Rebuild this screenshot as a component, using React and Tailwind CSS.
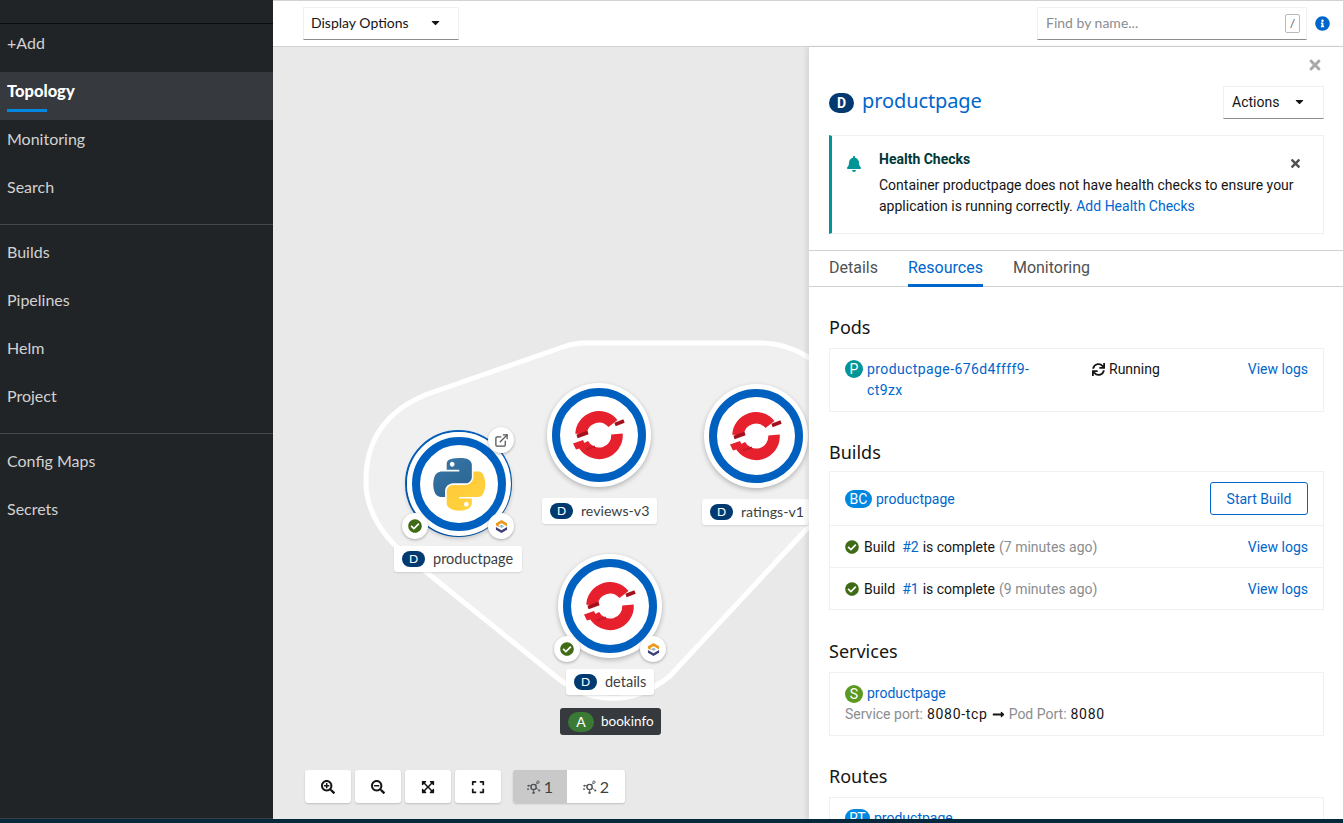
import { FaBell, FaCaretDown, FaCheckCircle, FaExpand, FaExpandArrowsAlt, FaInfoCircle, FaLongArrowAltRight, FaSearchMinus, FaSearchPlus, FaSync, FaTimes } from 'react-icons/fa';
import { ExternalLink } from 'lucide-react';

const navTop = ['Monitoring', 'Search'];
const navMid = ['Builds', 'Pipelines', 'Helm', 'Project'];
const navBottom = ['Config Maps', 'Secrets'];

function NavItem({ label, active }) {
  if (active) {
    return (
      <div className="relative h-12 bg-[#36393d] pl-[7px] pb-[10px] flex items-center text-white font-black text-[16.5px]">
        {label}
        <span className="absolute left-[7px] top-[37px] w-10 h-[3px] bg-[#0088e0]" />
      </div>
    );
  }
  return <div className="h-12 pl-[7px] pb-[10px] flex items-center text-[#d2d2d2] text-base">{label}</div>;
}

function Sidebar() {
  return (
    <aside className="w-[273px] shrink-0 bg-[#212427] font-['Lato',sans-serif] border-b border-[#3c3f42]">
      <div className="h-6 border-b border-[#0b0c0d]" />
      <div className="h-[38px] mb-[10px] pl-[7px] flex items-center text-[#d2d2d2] text-base">+Add</div>
      <NavItem label="Topology" active />
      {navTop.map((n) => <NavItem key={n} label={n} />)}
      <div className="my-2 h-px bg-[#45484b]" />
      {navMid.map((n) => <NavItem key={n} label={n} />)}
      <div className="my-2 h-px bg-[#45484b]" />
      {navBottom.map((n) => <NavItem key={n} label={n} />)}
    </aside>
  );
}

function Toolbar() {
  return (
    <div className="h-[47px] shrink-0 bg-white border-t border-b border-[#d2d2d2] flex items-center pl-[30px] pr-[13px] font-['Lato',sans-serif]">
      <button className="w-[156px] h-[33px] pl-[7px] pb-[2px] border border-[#f0f0f0] border-b-[#8a8d90] flex items-center justify-between pr-[16px] text-sm text-[#151515]">
        Display Options
        <FaCaretDown className="text-[13px]" />
      </button>
      <div className="ml-auto w-[270px] h-[33px] border border-[#f0f0f0] border-b-[#8a8d90] flex items-center justify-between pl-2 pr-[6px] pb-[2px] text-sm text-[#8a8d90]">
        Find by name...
        <span className="w-[15px] h-[19px] mt-[2px] border border-[#b8bbbe] rounded-[2px] text-[#4f5255] text-xs flex items-center justify-center">/</span>
      </div>
      <FaInfoCircle className="ml-2 text-[#0066cc] text-[15px]" />
    </div>
  );
}

function RedHatLogo() {
  return (
    <svg viewBox="0 0 60 60" className="w-[60px] h-[60px]">
      <path d="M12 29 A18 18 0 0 1 44 18.5" fill="none" stroke="#e7202e" strokeWidth="11.5" />
      <path d="M48 29 A18 18 0 0 1 14 38.5" fill="none" stroke="#e7202e" strokeWidth="11.5" />
      <path d="M4 38.5 L14 35 L17 41.5 L7 44.5 Z" fill="#e7202e" />
      <path d="M8 31.5 L19 27.5" stroke="#a3111d" strokeWidth="3.5" />
      <path d="M46 19.5 L55 16" stroke="#a3111d" strokeWidth="3.5" />
      <path d="M17 44.5 L26 41.5" stroke="#c91a27" strokeWidth="2" />
    </svg>
  );
}

function PythonLogo() {
  return (
    <svg viewBox="0 0 112 113" className="w-[53px] h-[53px]">
      <defs>
        <linearGradient id="pyBlue" x1="0.2" y1="0" x2="0.8" y2="1">
          <stop offset="0" stopColor="#3776a6" />
          <stop offset="1" stopColor="#2a6390" />
        </linearGradient>
        <linearGradient id="pyYellow" x1="0.8" y1="1" x2="0.2" y2="0">
          <stop offset="0" stopColor="#ffd43b" />
          <stop offset="1" stopColor="#ffc83d" />
        </linearGradient>
      </defs>
      <path fill="url(#pyBlue)" d="M54.9 0C50.3 0 46 .4 42.1 1.1 30.8 3.1 28.7 7.3 28.7 15v10.3h26.8v3.4H18.6C10.8 28.7 4 33.3 1.9 42.3c-2.5 10.2-2.6 16.6 0 27.2 1.9 7.9 6.5 13.5 14.2 13.5h9.2V70.8c0-8.8 7.7-16.7 16.8-16.7h26.8c7.4 0 13.4-6.1 13.4-13.6V15c0-7.3-6.1-12.7-13.4-13.9C64.3.3 59.5 0 54.9 0zM40.4 8.2c2.8 0 5 2.3 5 5.1s-2.3 5.1-5 5.1c-2.8 0-5-2.3-5-5.1s2.3-5.1 5-5.1z" />
      <path fill="url(#pyYellow)" d="M85.6 28.7v11.9c0 9.2-7.8 17-16.7 17H42.1c-7.3 0-13.4 6.3-13.4 13.6v25.5c0 7.3 6.3 11.5 13.4 13.6 8.5 2.5 16.6 3 26.8 0 6.7-2 13.4-5.9 13.4-13.6V86.5H55.5v-3.4h40.2c7.8 0 10.7-5.4 13.4-13.6 2.8-8.4 2.7-16.5 0-27.2-1.9-7.8-5.6-13.6-13.4-13.6H85.6zM70.6 93.3c2.8 0 5 2.3 5 5.1s-2.3 5.1-5 5.1c-2.8 0-5-2.3-5-5.1s2.3-5.1 5-5.1z" />
    </svg>
  );
}

function S2iIcon() {
  return (
    <svg viewBox="0 0 14 14" className="w-[13px] h-[13px]">
      <path d="M7 0 L13 3.4 L13 7 L10 5.2 L7 3.5 L4 5.2 L4 7.5 L1 6 L1 3.4 Z" fill="#ec9a1e" />
      <path d="M1 7.6 L7 11 L13 7.6 L13 10.6 L7 14 L1 10.6 Z" fill="#3c3f78" />
      <path d="M4.3 6.6 L7 5 L9.7 6.6 L7 8.6 Z" fill="#8ab8dc" />
    </svg>
  );
}

function Decorator({ className, children }) {
  return (
    <div className={`absolute w-[26px] h-[26px] rounded-full bg-white shadow-[0_1px_3px_rgba(0,0,0,0.3)] flex items-center justify-center ${className}`}>
      {children}
    </div>
  );
}

function WorkloadCircle({ className, python }) {
  return (
    <div className={`absolute w-[104px] h-[104px] rounded-full bg-white shadow-[0_2px_5px_rgba(0,0,0,0.25)] flex items-center justify-center ${className}`}>
      <div className="w-[94px] h-[94px] rounded-full border-[8px] border-[#0060c0] flex items-center justify-center">
        {python ? <PythonLogo /> : <RedHatLogo />}
      </div>
    </div>
  );
}

function NodeLabel({ className, text }) {
  return (
    <div className={`absolute h-[26px] rounded-[3px] bg-white shadow-[0_1px_2px_rgba(0,0,0,0.12)] flex items-center pl-2 text-[#3c3f42] font-['Lato',sans-serif] ${className}`}>
      <span className="w-[23px] h-[16px] mr-2 rounded-full bg-[#003a70] text-white text-xs flex items-center justify-center">D</span>
      {text}
    </div>
  );
}

function TopologyIcon() {
  return (
    <svg viewBox="0 0 16 16" className="w-[14px] h-[14px] text-[#4f5255]" fill="none" stroke="currentColor">
      <circle cx="7.5" cy="8" r="3" strokeWidth="1.6" />
      <circle cx="12.5" cy="2.5" r="1.4" strokeWidth="1" />
      <path d="M9.5 5.8 L11.5 3.6 M4.8 7 L2.6 6.2 M10.2 9.2 L13 11 M7.5 11 L7.5 13.5" strokeWidth="1" />
      <circle cx="1.6" cy="6.5" r="1.2" fill="currentColor" stroke="none" />
      <circle cx="1.2" cy="10.5" r="1" fill="currentColor" stroke="none" />
      <circle cx="14" cy="12" r="1.2" fill="currentColor" stroke="none" />
      <circle cx="7.5" cy="14.5" r="1.4" fill="currentColor" stroke="none" />
    </svg>
  );
}

function ZoomButton({ children }) {
  return (
    <button className="w-[46px] h-[33px] rounded-[3px] bg-white shadow-[0_1px_2px_rgba(0,0,0,0.18)] flex items-center justify-center text-[#151515] text-sm">
      {children}
    </button>
  );
}

function Canvas() {
  return (
    <div className="relative flex-1 bg-[#e9e9e9] overflow-hidden">
      <svg className="absolute left-0 top-0 w-[536px] h-[772px]" viewBox="273 47 536 772">
        <path
          d="M581 343 L760 343 Q790 343 815 362 L815 520 L670 676 Q640 700 610 698 Q585 698 560 680 L415 563 Q365 525 366 480 Q366 420 425 395 L560 348 Q570 344 581 343 Z"
          fill="#f0f0f0"
          stroke="#ffffff"
          strokeWidth="5"
        />
      </svg>

      {/* productpage */}
      <div className="absolute left-[132px] top-[383px] w-[107px] h-[107px] rounded-full border-2 border-[#0060c0]" />
      <WorkloadCircle className="left-[134px] top-[385px]" python />
      <Decorator className="left-[215px] top-[380px]"><ExternalLink className="w-[15px] h-[15px] text-[#4f5255]" strokeWidth={2} /></Decorator>
      <Decorator className="left-[129px] top-[466px]"><FaCheckCircle className="text-[#3f6b16] text-sm" /></Decorator>
      <Decorator className="left-[215px] top-[466px]"><S2iIcon /></Decorator>
      <NodeLabel className="left-[121px] top-[499px] w-[128px] text-[14.5px]" text="productpage" />

      {/* reviews-v3 */}
      <WorkloadCircle className="left-[274px] top-[336px]" />
      <NodeLabel className="left-[269px] top-[451px] w-[115px] text-[14.2px]" text="reviews-v3" />

      {/* ratings-v1 */}
      <WorkloadCircle className="left-[431px] top-[337px]" />
      <NodeLabel className="left-[429px] top-[452px] w-[107px] text-[14.2px]" text="ratings-v1" />

      {/* details */}
      <WorkloadCircle className="left-[285px] top-[507px]" />
      <Decorator className="left-[281px] top-[589px]"><FaCheckCircle className="text-[#3f6b16] text-sm" /></Decorator>
      <Decorator className="left-[367px] top-[589px]"><S2iIcon /></Decorator>
      <NodeLabel className="left-[293px] top-[622px] w-[88px] text-[14.5px]" text="details" />

      {/* group label */}
      <div className="absolute left-[287px] top-[661px] w-[101px] h-[27px] rounded-[3px] bg-[#36393d] flex items-center pl-2 text-[13.5px] text-white font-['Lato',sans-serif]">
        <span className="w-[26px] h-[20px] mr-[7px] rounded-full bg-[#3b7a35] text-sm flex items-center justify-center">A</span>
        bookinfo
      </div>

      {/* zoom controls */}
      <div className="absolute left-8 bottom-4 flex font-['Lato',sans-serif]">
        <div className="flex gap-1">
          <ZoomButton><FaSearchPlus /></ZoomButton>
          <ZoomButton><FaSearchMinus /></ZoomButton>
          <ZoomButton><FaExpandArrowsAlt /></ZoomButton>
          <ZoomButton><FaExpand /></ZoomButton>
        </div>
        <div className="ml-3 flex rounded-[3px] overflow-hidden shadow-[0_1px_2px_rgba(0,0,0,0.18)] text-base text-[#3c3f42]">
          <div className="w-[54px] h-[33px] bg-[#c9c9c9] flex items-center justify-center gap-[3px]"><TopologyIcon />1</div>
          <div className="w-[58px] h-[33px] bg-white flex items-center justify-center gap-[3px]"><TopologyIcon />2</div>
        </div>
      </div>
    </div>
  );
}

function Badge({ text, className }) {
  return <span className={`inline-flex items-center justify-center rounded-full text-white text-sm h-[18px] shrink-0 ${className}`}>{text}</span>;
}

function A({ children, className = '' }) {
  return <a className={`text-[#0066cc] ${className}`}>{children}</a>;
}

function Section({ title, gap, bottom, children }) {
  return (
    <section className={bottom}>
      <h2 className={`text-lg leading-[27px] text-[#151515] font-['Noto_Sans',sans-serif] ${gap}`}>{title}</h2>
      <div className="border border-[#f0f0f0]">{children}</div>
    </section>
  );
}

function BuildRow({ id, time }) {
  return (
    <div className="h-[42px] px-[15px] flex items-center border-t border-[#f0f0f0]">
      <FaCheckCircle className="text-[#3f6b16] text-sm mr-[5px]" />
      <span>Build</span>
      <A className="ml-[7px] mr-1">#{id}</A>
      <span>is complete</span>
      <span className="ml-1 text-[#8a8d90]">({time} minutes ago)</span>
      <A className="ml-auto">View logs</A>
    </div>
  );
}

function Panel() {
  return (
    <div className="relative w-[534px] shrink-0 bg-white overflow-hidden shadow-[-3px_0_4px_rgba(0,0,0,0.08)] font-['Roboto',sans-serif] text-sm text-[#151515]">
      <div className="h-[39px] flex justify-end items-center pr-5 pb-[3px]">
        <FaTimes className="text-[#a8a9ab] text-base" />
      </div>
      <div className="h-[33px] pl-5 pr-[19px] flex items-center">
        <Badge text="D" className="w-[25px] !h-[20px] bg-[#003a70] font-bold" />
        <span className="ml-2 text-xl tracking-[-0.1px] text-[#0066cc] font-['Noto_Sans',sans-serif] pb-[4px]">productpage</span>
        <button className="ml-auto w-[101px] h-[33px] pl-2 pb-[2px] pr-[17px] border border-[#f0f0f0] border-b-[#8a8d90] flex items-center justify-between">
          Actions
          <FaCaretDown className="text-[13px]" />
        </button>
      </div>
      <div className="relative mt-4 mx-5 mr-[19px] h-[99px] border border-[#f0f0f0] border-l-[3px] border-l-[#009596] pl-[47px] pt-[13px]">
        <FaBell className="absolute left-[14px] top-[20px] text-[#009596] text-base" />
        <FaTimes className="absolute right-[21px] top-[21px] text-[#4f5255] text-[13px]" />
        <div className="font-bold text-[#003737] leading-[21px]">Health Checks</div>
        <p className="mt-[5px] leading-[21px] w-[424px]">
          Container productpage does not have health checks to ensure your application is running correctly. <A>Add Health Checks</A>
        </p>
      </div>
      <div className="mt-4 h-[37px] border-t border-b border-[#d2d2d2] pl-5 flex text-base text-[#4f5255]">
        <span className="leading-[33px]">Details</span>
        <span className="ml-[30px] leading-[33px] h-[36px] border-b-[3px] border-[#0066cc] text-[#0066cc]">Resources</span>
        <span className="ml-[30px] leading-[33px]">Monitoring</span>
      </div>
      <div className="mt-[27px] ml-5 mr-[19px]">
        <Section title="Pods" gap="mb-[7px]" bottom="mb-[27px]">
          <div className="h-[62px] pl-[15px] pr-[15px] pt-[10px] flex leading-[21px]">
            <Badge text="P" className="w-[18px] bg-[#009596] mt-[1px]" />
            <A className="ml-1 w-[180px] tracking-[0.4px]">productpage-676d4ffff9-ct9zx</A>
            <FaSync className="ml-[45px] mt-1 text-[13px]" />
            <span className="ml-[4px]">Running</span>
            <A className="ml-auto">View logs</A>
          </div>
        </Section>
        <Section title="Builds" gap="mb-[5px]" bottom="mb-[28px]">
          <div className="h-[53px] px-[15px] flex items-center">
            <Badge text="BC" className="w-[27px] bg-[#0088e0]" />
            <A className="ml-[4px]">productpage</A>
            <button className="ml-auto w-[98px] h-[33px] rounded-[3px] border border-[#0066cc] text-[#0066cc]">Start Build</button>
          </div>
          <BuildRow id="2" time="7" />
          <BuildRow id="1" time="9" />
        </Section>
        <Section title="Services" gap="mb-[7px]" bottom="mb-[27px]">
          <div className="h-[62px] px-[15px] pt-[10px] leading-[21px]">
            <div className="flex items-center">
              <Badge text="S" className="w-[18px] bg-[#5b9a1f]" />
              <A className="ml-1">productpage</A>
            </div>
            <div className="flex items-center">
              <span className="text-[#8a8d90]">Service port:</span>
              <span className="ml-1 tracking-[0.7px]">8080-tcp</span>
              <FaLongArrowAltRight className="mx-1 text-[13px]" />
              <span className="text-[#8a8d90]">Pod Port:</span>
              <span className="ml-1 tracking-[0.7px]">8080</span>
            </div>
          </div>
        </Section>
        <Section title="Routes" gap="mb-[7px]">
          <div className="h-[62px] px-[15px] pt-[10px] leading-[21px] flex">
            <Badge text="RT" className="w-[25px] bg-[#0088e0] mt-[1px]" />
            <A className="ml-[4px]">productpage</A>
          </div>
        </Section>
      </div>
    </div>
  );
}

export default function App() {
  return (
    <div className="h-screen w-full flex flex-col bg-[#06293d] overflow-hidden">
      <div className="flex h-[819px]">
        <Sidebar />
        <div className="flex-1 flex flex-col min-w-0">
          <Toolbar />
          <div className="flex-1 flex min-h-0">
            <Canvas />
            <Panel />
          </div>
        </div>
      </div>
    </div>
  );
}
